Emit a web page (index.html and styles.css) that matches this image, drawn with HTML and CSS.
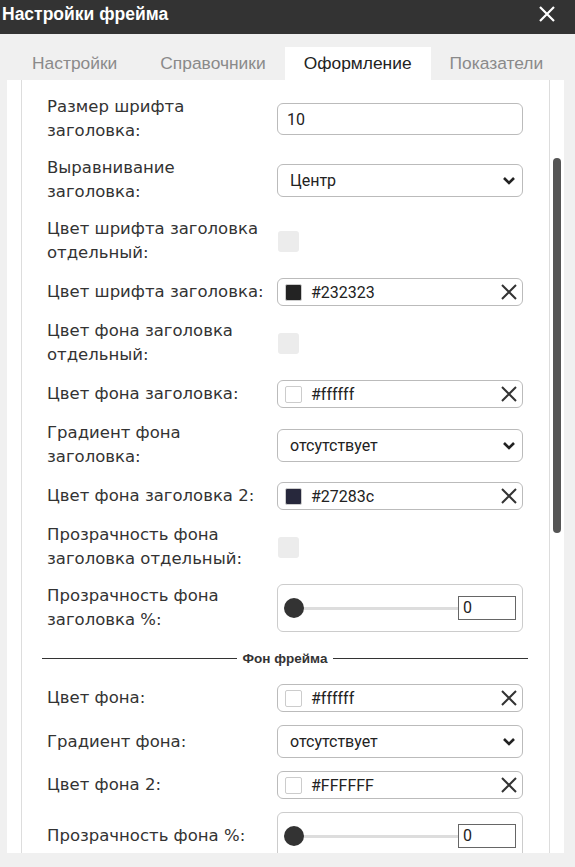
FILE: index.html
```html
<!DOCTYPE html>
<html lang="ru">
    <head>
        <meta charset="UTF-8">
        <meta name="viewport" content="width=device-width, initial-scale=1.0">
        <link rel="stylesheet" href="styles.css">
        <title>Настройки фрейма</title>
    </head>
    <body>
        <div class="titlebar">
            <span class="title">Настройки фрейма</span>
            <svg class="close" width="20" height="20" viewBox="0 0 20 20"><path d="M3 3L17 17M17 3L3 17" stroke="#fff" stroke-width="2.2" fill="none"/></svg>
        </div>

        <div class="tabs">
            <div class="tab">Настройки</div>
            <div class="tab">Справочники</div>
            <div class="tab active">Оформление</div>
            <div class="tab">Показатели</div>
        </div>

        <div class="panel">
            <div class="scroll-area">
                <div class="form">
                    <div class="label">Размер шрифта<br>заголовка:</div>
                    <div class="field"><input class="text-input" type="text" value="10"></div>

                    <div class="label">Выравнивание<br>заголовка:</div>
                    <div class="field">
                        <div class="select"><span>Центр</span>
                            <svg width="14" height="9" viewBox="0 0 14 9"><path d="M2 2L7 7L12 2" stroke="#222" stroke-width="2.6" fill="none"/></svg>
                        </div>
                    </div>

                    <div class="label">Цвет шрифта заголовка<br>отдельный:</div>
                    <div class="field"><span class="checkbox"></span></div>

                    <div class="label">Цвет шрифта заголовка:</div>
                    <div class="field">
                        <div class="color-field"><span class="swatch" style="background:#232323"></span><span class="hex">#232323</span>
                            <svg class="clear" width="18" height="18" viewBox="0 0 18 18"><path d="M2 2L16 16M16 2L2 16" stroke="#333" stroke-width="2" fill="none"/></svg>
                        </div>
                    </div>

                    <div class="label">Цвет фона заголовка<br>отдельный:</div>
                    <div class="field"><span class="checkbox"></span></div>

                    <div class="label">Цвет фона заголовка:</div>
                    <div class="field">
                        <div class="color-field"><span class="swatch" style="background:#ffffff"></span><span class="hex">#ffffff</span>
                            <svg class="clear" width="18" height="18" viewBox="0 0 18 18"><path d="M2 2L16 16M16 2L2 16" stroke="#333" stroke-width="2" fill="none"/></svg>
                        </div>
                    </div>

                    <div class="label">Градиент фона<br>заголовка:</div>
                    <div class="field">
                        <div class="select"><span>отсутствует</span>
                            <svg width="14" height="9" viewBox="0 0 14 9"><path d="M2 2L7 7L12 2" stroke="#222" stroke-width="2.6" fill="none"/></svg>
                        </div>
                    </div>

                    <div class="label">Цвет фона заголовка 2:</div>
                    <div class="field">
                        <div class="color-field"><span class="swatch" style="background:#27283c"></span><span class="hex">#27283c</span>
                            <svg class="clear" width="18" height="18" viewBox="0 0 18 18"><path d="M2 2L16 16M16 2L2 16" stroke="#333" stroke-width="2" fill="none"/></svg>
                        </div>
                    </div>

                    <div class="label">Прозрачность фона<br>заголовка отдельный:</div>
                    <div class="field"><span class="checkbox"></span></div>

                    <div class="label">Прозрачность фона<br>заголовка %:</div>
                    <div class="field">
                        <div class="slider"><span class="track"><span class="knob"></span></span><span class="number">0</span></div>
                    </div>

                    <div class="divider"><span>Фон фрейма</span></div>

                    <div class="label">Цвет фона:</div>
                    <div class="field">
                        <div class="color-field"><span class="swatch" style="background:#ffffff"></span><span class="hex">#ffffff</span>
                            <svg class="clear" width="18" height="18" viewBox="0 0 18 18"><path d="M2 2L16 16M16 2L2 16" stroke="#333" stroke-width="2" fill="none"/></svg>
                        </div>
                    </div>

                    <div class="label">Градиент фона:</div>
                    <div class="field">
                        <div class="select"><span>отсутствует</span>
                            <svg width="14" height="9" viewBox="0 0 14 9"><path d="M2 2L7 7L12 2" stroke="#222" stroke-width="2.6" fill="none"/></svg>
                        </div>
                    </div>

                    <div class="label">Цвет фона 2:</div>
                    <div class="field">
                        <div class="color-field"><span class="swatch" style="background:#ffffff"></span><span class="hex">#FFFFFF</span>
                            <svg class="clear" width="18" height="18" viewBox="0 0 18 18"><path d="M2 2L16 16M16 2L2 16" stroke="#333" stroke-width="2" fill="none"/></svg>
                        </div>
                    </div>

                    <div class="label">Прозрачность фона %:</div>
                    <div class="field">
                        <div class="slider"><span class="track"><span class="knob"></span></span><span class="number">0</span></div>
                    </div>
                </div>
            </div>
            <div class="scrollbar"><div class="thumb"></div></div>
        </div>
    </body>
</html>
```

FILE: styles.css
```css
body, html {
    margin: 0;
    width: 100%;
    height: 100%;
    overflow: hidden;
}
body {
    background-color: #f0f0f0;
    font-family: "Liberation Sans", Arial, sans-serif;
}

/* заголовок окна */
.titlebar {
    height: 34px;
    background-color: #333333;
    display: flex;
    align-items: center;
    justify-content: space-between;
    padding: 0 18px 6px 2px;
    box-sizing: border-box;
}
.title {
    color: #ffffff;
    font-weight: bold;
    font-size: 17.5px;
}

/* вкладки */
.tabs {
    display: flex;
    padding: 13px 0 0 12px;
    height: 46px;
    box-sizing: border-box;
}
.tab {
    padding: 0 19px;
    line-height: 33px;
    font-size: 17.4px;
    color: #8a8a8a;
}
.tab:first-child {
    margin-left: 1px;
    margin-right: 5px;
}
.tab.active {
    background-color: #ffffff;
    color: #222222;
}

.panel {
    margin: 0 11px 0 7px;
    height: 773px;
    background-color: #ffffff;
    display: flex;
}
.scroll-area {
    flex: 1;
    margin-left: 14px;
    border-left: 1px solid #dddddd;
    padding: 14px 25px 0 25px;
    overflow: hidden;
}
.scrollbar {
    width: 15px;
    border-left: 1px solid #dddddd;
    box-sizing: border-box;
    padding: 78px 0 0 3px;
}
.thumb {
    width: 8px;
    height: 375px;
    border-radius: 4px;
    background-color: #555555;
}

/* форма */
.form {
    display: grid;
    grid-template-columns: 222px 246px;
    column-gap: 8px;
    row-gap: 13px;
    align-items: center;
    margin-top: 1px;
}
.label {
    font-family: "DejaVu Sans", Verdana, sans-serif;
    font-size: 16.5px;
    line-height: 24px;
    color: #333333;
}
.field {
    display: flex;
    align-items: center;
}

.text-input, .select, .color-field, .number {
    font-family: Roboto, "Liberation Sans", Arial, sans-serif;
    font-size: 16px;
    color: #222222;
}

.text-input {
    width: 100%;
    height: 32px;
    box-sizing: border-box;
    border: 1px solid #bbbbbb;
    border-radius: 6px;
    padding: 0 9px;
}

.select {
    width: 100%;
    height: 33px;
    box-sizing: border-box;
    border: 1px solid #bbbbbb;
    border-radius: 6px;
    padding: 0 6px 0 12px;
    display: flex;
    align-items: center;
    justify-content: space-between;
}

.checkbox {
    width: 21px;
    height: 21px;
    margin-left: 1px;
    border-radius: 3px;
    background-color: #ececec;
}

.color-field {
    width: 100%;
    height: 28px;
    box-sizing: border-box;
    border: 1px solid #bbbbbb;
    border-radius: 6px;
    padding: 0 4px 0 7px;
    display: flex;
    align-items: center;
}
.swatch {
    width: 17px;
    height: 17px;
    border: 1px solid #cccccc;
    border-radius: 2px;
    box-sizing: border-box;
    margin-right: 9px;
}
.hex {
    flex: 1;
}

.slider {
    width: 100%;
    height: 48px;
    box-sizing: border-box;
    border: 1px solid #cccccc;
    border-radius: 6px;
    padding: 0 6px;
    display: flex;
    align-items: center;
}
.track {
    flex: 1;
    height: 3px;
    background-color: #dddddd;
    display: flex;
    align-items: center;
}
.knob {
    width: 20px;
    height: 20px;
    border-radius: 50%;
    background-color: #333333;
}
.number {
    width: 58px;
    height: 24px;
    box-sizing: border-box;
    border: 1px solid #666666;
    padding-left: 4px;
    line-height: 22px;
}

.divider {
    grid-column: 1 / -1;
    margin: 6px -5px 5px -5px;
    display: flex;
    align-items: center;
    gap: 6px;
    font-size: 13.5px;
    font-weight: bold;
    color: #333333;
}
.divider::before, .divider::after {
    content: "";
    flex: 1;
    height: 1px;
    background-color: #333333;
}
```
